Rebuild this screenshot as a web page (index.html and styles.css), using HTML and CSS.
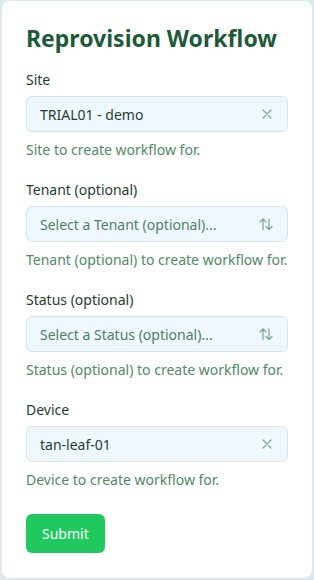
FILE: index.html
```html
<!DOCTYPE html>
<html>
<head>
	<title>Reprovision Workflow</title>
	<link rel="stylesheet" href="styles.css">
</head>
<body>
	<div class="card">
		<h1 class="title">Reprovision Workflow</h1>
		<form class="form">
			<div class="field">
				<label class="label">Site</label>
				<div class="select">
					<span class="value">TRIAL01 - demo</span>
					<svg class="icon clear" viewBox="0 0 10 10"><path d="M1 1l8 8M9 1 1 9"/></svg>
				</div>
				<p class="help">Site to create workflow for.</p>
			</div>
			<div class="field">
				<label class="label">Tenant (optional)</label>
				<div class="select">
					<span class="placeholder">Select a Tenant (optional)...</span>
					<svg class="icon sort" viewBox="0 0 14 12"><path d="M4 11.5V1M1 4l3-3 3 3M10 1v10.5M7 8.5l3 3 3-3"/></svg>
				</div>
				<p class="help">Tenant (optional) to create workflow for.</p>
			</div>
			<div class="field">
				<label class="label">Status (optional)</label>
				<div class="select">
					<span class="placeholder">Select a Status (optional)...</span>
					<svg class="icon sort" viewBox="0 0 14 12"><path d="M4 11.5V1M1 4l3-3 3 3M10 1v10.5M7 8.5l3 3 3-3"/></svg>
				</div>
				<p class="help">Status (optional) to create workflow for.</p>
			</div>
			<div class="field">
				<label class="label">Device</label>
				<div class="select">
					<span class="value">tan-leaf-01</span>
					<svg class="icon clear" viewBox="0 0 10 10"><path d="M1 1l8 8M9 1 1 9"/></svg>
				</div>
				<p class="help">Device to create workflow for.</p>
			</div>
			<button type="button" class="submit">Submit</button>
		</form>
	</div>
</body>
</html>
```

FILE: styles.css
```css
body {
	margin: 0;
	padding: 1px 2px 2px 2px;
	background: #dde8ef;
	font-family: "Noto Sans", "Open Sans", sans-serif;
}
.card {
	background: #ffffff;
	border-radius: 8px;
	padding: 23px 24px 24px 24px;
	min-height: 530px;
}
.title {
	margin: 0 0 18px 0;
	font-size: 23px;
	line-height: 28px;
	font-weight: 700;
	color: #1d5a3a;
}
.form {
	display: flex;
	flex-direction: column;
}
.field {
	display: flex;
	flex-direction: column;
	margin-bottom: 20px;
}
.label {
	font-size: 14px;
	line-height: 20px;
	color: #1f3d2e;
	margin-bottom: 6px;
}
.select {
	display: flex;
	align-items: center;
	justify-content: space-between;
	height: 34px;
	padding: 0 14px 0 13px;
	background: #f0f8ff;
	border: 1px solid #d8e5ec;
	border-radius: 6px;
	font-size: 14px;
}
.value {
	color: #1f3d2e;
}
.placeholder {
	color: #4f8066;
}
.icon {
	fill: none;
	stroke: #7fa893;
	stroke-width: 1.3;
	stroke-linecap: round;
	stroke-linejoin: round;
}
.clear {
	width: 10px;
	height: 10px;
	margin-right: 1px;
}
.sort {
	width: 14px;
	height: 12px;
}
.help {
	margin: 8px 0 0 0;
	font-size: 14px;
	line-height: 20px;
	color: #4f8a68;
}
.submit {
	align-self: flex-start;
	margin-top: 4px;
	height: 39px;
	padding: 0 16px;
	border: none;
	border-radius: 6px;
	background: #1fc95d;
	color: #ffffff;
	font-family: "Noto Sans", "Open Sans", sans-serif;
	font-size: 14px;
}
```
